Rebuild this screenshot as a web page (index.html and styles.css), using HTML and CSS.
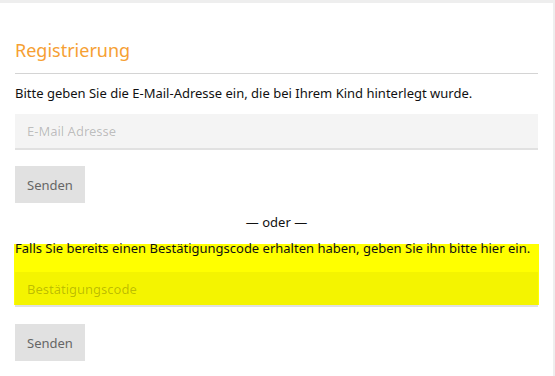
FILE: index.html
```html
<!DOCTYPE html>
<html lang="de">
<head>
<meta charset="utf-8">
<title>Registrierung</title>
<link rel="stylesheet" href="styles.css">
</head>
<body>
<div class="panel">
  <h2 class="title">Registrierung</h2>
  <p class="intro">Bitte geben Sie die E-Mail-Adresse ein, die bei Ihrem Kind hinterlegt wurde.</p>
  <input class="field" type="text" placeholder="E-Mail Adresse">
  <button class="btn btn-first" type="button">Senden</button>
  <div class="or">— oder —</div>
  <div class="highlight">
    <label class="code-label">Falls Sie bereits einen Bestätigungscode erhalten haben, geben Sie ihn bitte hier ein.</label>
    <input class="field field-code" type="text" placeholder="Bestätigungscode">
  </div>
  <button class="btn btn-second" type="button">Senden</button>
</div>
</body>
</html>
```
FILE: styles.css
```css
html, body {
  margin: 0;
  padding: 0;
  background: #eeeeee;
  height: 100%;
}
body {
  font-family: "Noto Sans", "Open Sans", sans-serif;
  color: #111;
  font-size: 13px;
  padding-top: 3px;
  box-sizing: border-box;
}
.panel {
  width: 553px;
  box-sizing: border-box;
  min-height: 373px;
  background: #fff;
  padding: 35px 15px 15px;
  display: flex;
  flex-direction: column;
  align-items: flex-start;
}
.title {
  align-self: stretch;
  margin: 0;
  font-weight: normal;
  font-size: 18px;
  line-height: 24px;
  color: #f6a033;
  padding-bottom: 11px;
  border-bottom: 1px solid #d4d4d4;
}
.intro {
  margin: 10px 0 0;
  line-height: 18px;
}
.field {
  align-self: stretch;
  margin: 12px 0 0;
  height: 34px;
  box-sizing: border-box;
  border: 0;
  padding: 0 12px;
  background: rgba(0, 0, 0, 0.045);
  box-shadow: 0 2px 0 #e1e1e1;
  font-family: "Noto Sans", "Open Sans", sans-serif;
  font-size: 13px;
  color: #333;
  outline: none;
}
.field::placeholder {
  color: rgba(0, 0, 0, 0.24);
}
.btn {
  height: 37px;
  padding: 0 12px;
  border: 0;
  background: #e1e1e1;
  color: #666;
  font-family: "Noto Sans", "Open Sans", sans-serif;
  font-size: 13px;
  cursor: pointer;
}
.btn-first {
  margin-top: 18px;
}
.or {
  align-self: stretch;
  text-align: center;
  line-height: 18px;
  margin-top: 10px;
}
.highlight {
  align-self: stretch;
  margin: 13px -1px 0;
  padding: 0 1px;
  background: #ffff00;
  display: flex;
  flex-direction: column;
}
.code-label {
  line-height: 14px;
  margin-top: -3px;
  margin-bottom: 17px;
}
.field-code {
  margin: 0;
  height: 33px;
}
.btn-second {
  margin-top: 19px;
}
```
